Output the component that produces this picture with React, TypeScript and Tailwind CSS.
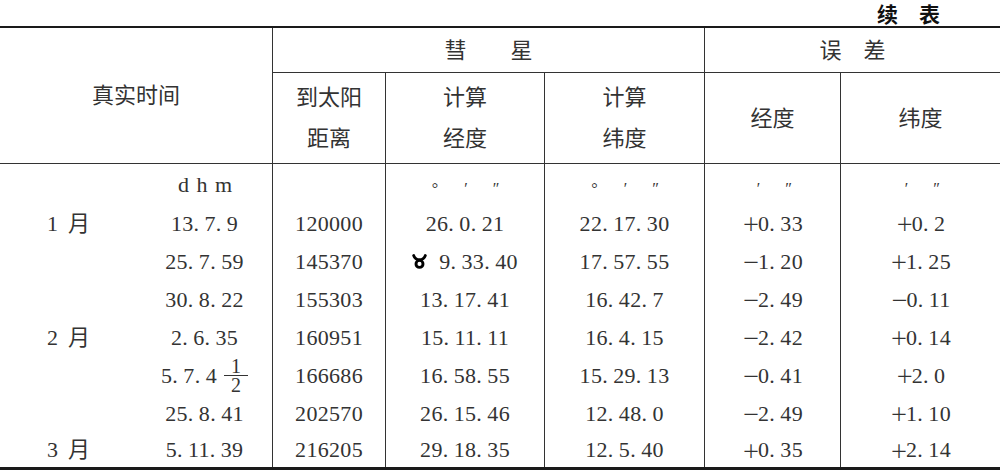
import React from "react";

type Row = {
  m: string;
  t: string;
  frac?: boolean;
  d: string;
  lon: string;
  taurus?: boolean;
  lat: string;
  e1: string;
  e2: string;
};

const rows: Row[] = [
  { m: "1", t: "13.7.9", d: "120000", lon: "26.0.21", lat: "22.17.30", e1: "+0.33", e2: "+0.2" },
  { m: "", t: "25.7.59", d: "145370", lon: "9.33.40", taurus: true, lat: "17.57.55", e1: "-1.20", e2: "+1.25" },
  { m: "", t: "30.8.22", d: "155303", lon: "13.17.41", lat: "16.42.7", e1: "-2.49", e2: "-0.11" },
  { m: "2", t: "2.6.35", d: "160951", lon: "15.11.11", lat: "16.4.15", e1: "-2.42", e2: "+0.14" },
  { m: "", t: "5.7.4", frac: true, d: "166686", lon: "16.58.55", lat: "15.29.13", e1: "-0.41", e2: "+2.0" },
  { m: "", t: "25.8.41", d: "202570", lon: "26.15.46", lat: "12.48.0", e1: "-2.49", e2: "+1.10" },
  { m: "3", t: "5.11.39", d: "216205", lon: "29.18.35", lat: "12.5.40", e1: "+0.35", e2: "+2.14" },
];

function Num({ v }: { v: string }) {
  return (
    <span className="whitespace-nowrap tracking-[0.3px]">
      {v.split("").map((c, i) =>
        c === "." ? (
          <span key={i} className="inline-block w-[11px]">
            .
          </span>
        ) : (
          <span key={i}>{c}</span>
        )
      )}
    </span>
  );
}

function Signed({ v }: { v: string }) {
  const sign = v[0];
  const rest = v.slice(1);
  return (
    <span className="whitespace-nowrap inline-flex items-center">
      <span
        className="inline-block w-[16px] text-left text-[18px] leading-none"
        style={{ fontFamily: '"Noto Sans CJK SC", sans-serif' }}
      >
        {sign === "+" ? "＋" : "－"}
      </span>
      <Num v={rest} />
    </span>
  );
}

function Taurus() {
  return (
    <svg width="15" height="15" viewBox="0 0 15 15" className="mr-[12px] shrink-0">
      <path
        d="M1.7 1.6 C2.7 4.6 4.6 5.7 7.5 5.7 C10.4 5.7 12.3 4.6 13.3 1.6"
        fill="none"
        stroke="#000"
        strokeWidth="2.9"
        strokeLinecap="round"
      />
      <circle cx="7.5" cy="9.9" r="3.5" fill="none" stroke="#000" strokeWidth="2.9" />
    </svg>
  );
}

const cell = "flex items-center justify-center border-[#333]";

export default function App() {
  return (
    <div
      className="w-[1000px] h-[471px] bg-white text-[#333] text-[22px]"
      style={{ fontFamily: '"Liberation Serif", "Noto Sans CJK SC", serif' }}
    >
      <div className="h-[26px] flex items-center justify-end pr-[60px]">
        <span
          className="text-[21px] font-bold text-[#111] leading-[26px]"
          style={{ fontFamily: '"Noto Sans CJK SC", sans-serif' }}
        >
          续　表
        </span>
      </div>
      <div className="border-t-2 border-b-[3px] border-[#1a1a1a] grid grid-cols-[137px_136px_113px_159px_160px_136px_159px] grid-rows-[45px_91px_40px_38px_38px_38px_38px_38px_38px_35px]">
        {/* header */}
        <div className={`${cell} col-span-2 row-span-2 border-r border-b`}>真实时间</div>
        <div className={`${cell} col-span-3 border-r border-b`}>彗　　星</div>
        <div className={`${cell} col-span-2 border-b`}>误　差</div>

        <div className={`${cell} border-r border-b text-center leading-[41px] flex-col`}>
          <span>到太阳</span>
          <span>距离</span>
        </div>
        <div className={`${cell} border-r border-b text-center leading-[41px] flex-col`}>
          <span>计算</span>
          <span>经度</span>
        </div>
        <div className={`${cell} border-r border-b text-center leading-[41px] flex-col`}>
          <span>计算</span>
          <span>纬度</span>
        </div>
        <div className={`${cell} border-r border-b`}>经度</div>
        <div className={`${cell} border-b`}>纬度</div>

        {/* units row */}
        <div className={cell}></div>
        <div className={`${cell} border-r`}>
          <span className="tracking-[1px] pl-[2px]">d h m</span>
        </div>
        <div className={`${cell} border-r`}></div>
        <div className={`${cell} border-r text-[16px] pt-[10px]`}>
          <span className="w-[30px] text-center">°</span>
          <span className="w-[30px] text-center italic">′</span>
          <span className="w-[30px] text-center italic">″</span>
        </div>
        <div className={`${cell} border-r text-[16px] pt-[10px]`}>
          <span className="w-[30px] text-center">°</span>
          <span className="w-[30px] text-center italic">′</span>
          <span className="w-[30px] text-center italic">″</span>
        </div>
        <div className={`${cell} border-r text-[16px] pt-[10px]`}>
          <span className="w-[30px] text-center italic">′</span>
          <span className="w-[30px] text-center italic">″</span>
        </div>
        <div className={`${cell} text-[16px] pt-[10px]`}>
          <span className="w-[30px] text-center italic">′</span>
          <span className="w-[30px] text-center italic">″</span>
        </div>

        {rows.map((r, i) => (
          <React.Fragment key={i}>
            <div className={cell}>
              {r.m && (
                <span className="whitespace-nowrap">
                  {r.m}
                  <span className="ml-[10px]">月</span>
                </span>
              )}
            </div>
            <div className={`${cell} border-r`}>
              <Num v={r.t} />
              {r.frac && (
                <span className="inline-flex flex-col items-center ml-[7px] text-[20px] leading-[18px]">
                  <span className="w-[24px] text-center border-b border-[#333]">1</span>
                  <span className="w-[24px] text-center">2</span>
                </span>
              )}
            </div>
            <div className={`${cell} border-r`}>
              <Num v={r.d} />
            </div>
            <div className={`${cell} border-r`}>
              {r.taurus && <Taurus />}
              <Num v={r.lon} />
            </div>
            <div className={`${cell} border-r`}>
              <Num v={r.lat} />
            </div>
            <div className={`${cell} border-r`}>
              <Signed v={r.e1} />
            </div>
            <div className={cell}>
              <Signed v={r.e2} />
            </div>
          </React.Fragment>
        ))}
      </div>
    </div>
  );
}
